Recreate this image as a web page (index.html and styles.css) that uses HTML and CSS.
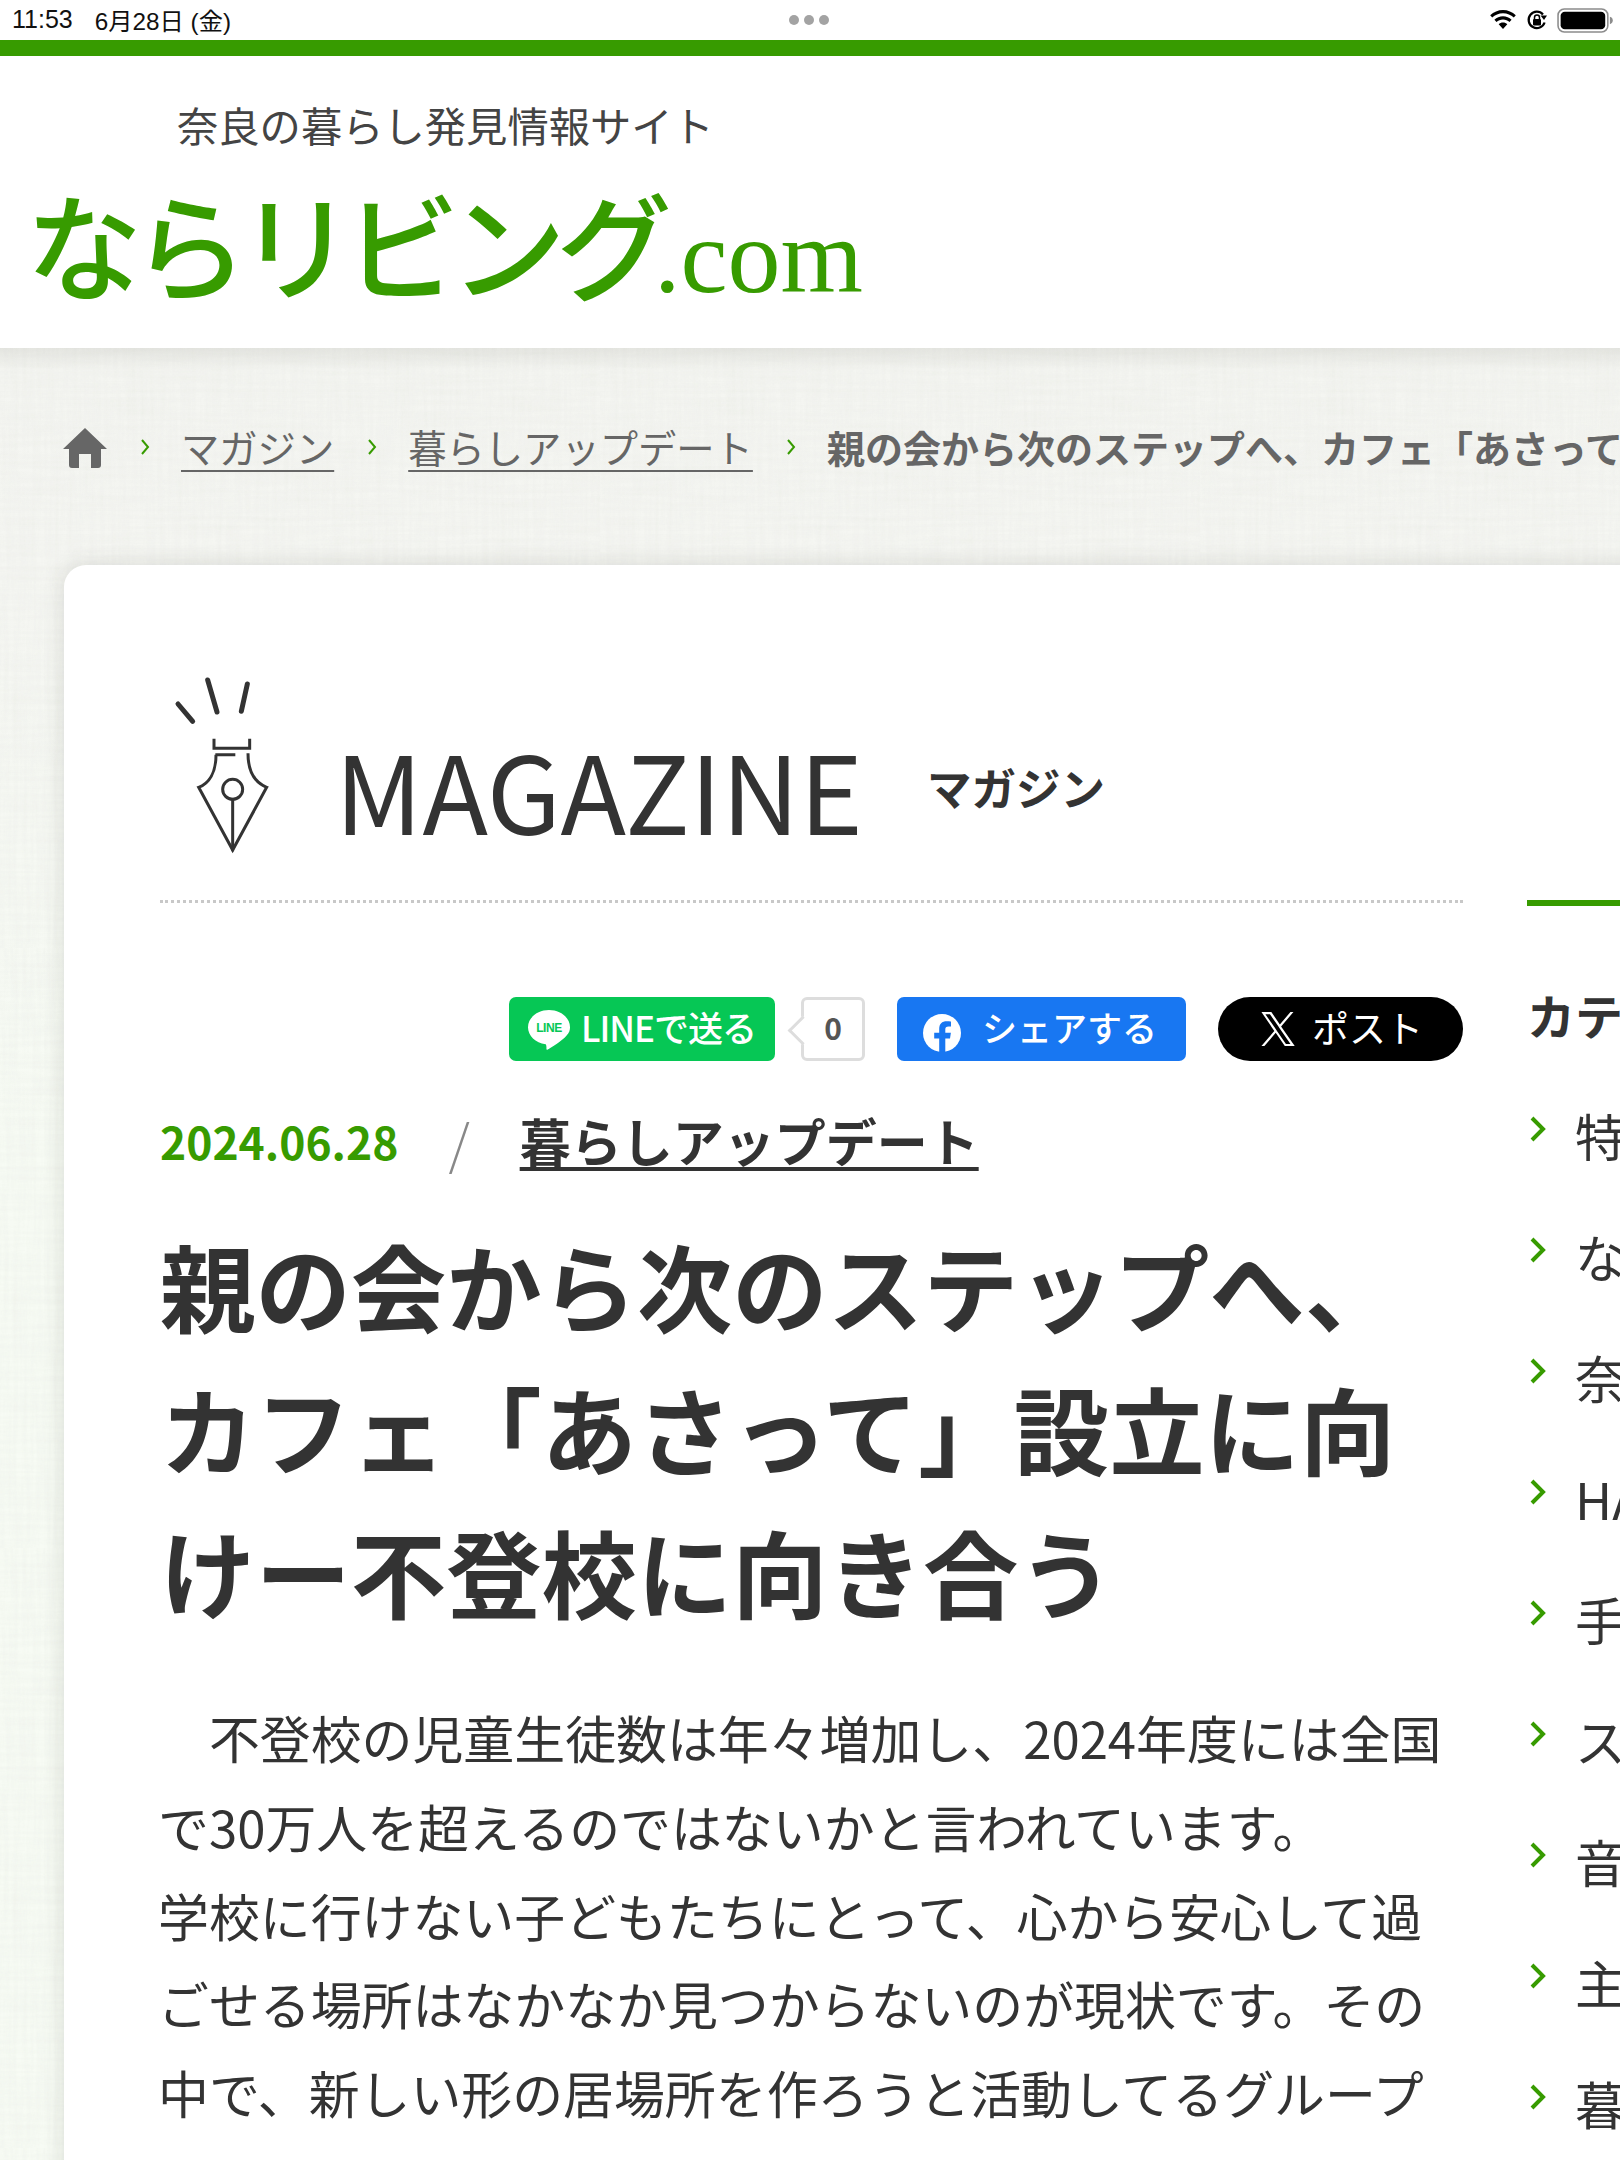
FILE: index.html
```html
<!DOCTYPE html>
<html lang="ja">
<head>
<meta charset="utf-8">
<title>ならリビング.com</title>
<link rel="stylesheet" href="styles.css">
</head>
<body>
<div class="status">
  <span class="time">11:53</span><span class="date">6月28日 (金)</span>
  <span class="dots"><i></i><i></i><i></i></span>
  <span class="status-icons">
    <svg class="wifi" viewBox="0 0 28 20" width="28" height="20"><path d="M14 3.2c4.2 0 8 1.6 10.8 4.3l2-2.2C23.400 2 18.900 0 14 0S4.600 2 1.200 5.300l2 2.200C6 4.800 9.800 3.200 14 3.200z"/><path d="M14 9.400c2.500 0 4.800 1 6.500 2.600l2.100-2.300C20.300 7.600 17.300 6.300 14 6.300s-6.300 1.300-8.600 3.400L7.500 12c1.700-1.600 4-2.600 6.500-2.600z"/><path d="M14 12.500c-1.700 0-3.200.6-4.300 1.700L14 19l4.300-4.800c-1.100-1.100-2.600-1.700-4.300-1.700z"/></svg>
    <svg class="lock" viewBox="0 0 22 22" width="22" height="22"><path d="M18.600 13.500A8.200 8.200 0 1 1 17 5.400" fill="none" stroke="#000" stroke-width="2.200"/><path d="M14.500 6.500h6.500L18 11z"/><rect x="7" y="10" width="8" height="6.500" rx="1"/><path d="M8.500 10V8.500a2.500 2.500 0 0 1 5 0V10" fill="none" stroke="#000" stroke-width="1.500"/></svg>
    <svg class="battery" viewBox="0 0 54 24" width="54" height="24"><rect x="1" y="1" width="48" height="22" rx="6" fill="none" stroke="#8c8c8c" stroke-width="1.500"/><rect x="3.500" y="3.500" width="43" height="17" rx="4"/><path d="M51 8.500c1.800.5 2.800 1.800 2.800 3.500s-1 3-2.800 3.500z" fill="#8c8c8c"/></svg>
  </span>
</div>
<div class="topbar"></div>
<header class="site-header">
  <p class="tagline">奈良の暮らし発見情報サイト</p>
  <div class="logo"><span class="logo-kana">ならリビング</span><span class="logo-com">.com</span></div>
</header>
<main class="page">
  <nav class="crumbs">
    <svg class="home" viewBox="0 0 44 40" width="44" height="40"><path d="M22 0 44 21h-6v16a3 3 0 0 1-3 3h-7V26H16v14H9a3 3 0 0 1-3-3V21H0z"/></svg>
    <svg class="chev-s" viewBox="0 0 10 18" width="10" height="18"><path d="M2 2l6 7-6 7"/></svg>
    <a class="crumb">マガジン</a>
    <svg class="chev-s" viewBox="0 0 10 18" width="10" height="18"><path d="M2 2l6 7-6 7"/></svg>
    <a class="crumb">暮らしアップデート</a>
    <svg class="chev-s" viewBox="0 0 10 18" width="10" height="18"><path d="M2 2l6 7-6 7"/></svg>
    <strong class="crumb-now">親の会から次のステップへ、カフェ「あさって」設立に向けー不登校に向き合う</strong>
  </nav>
  <div class="card">
    <article class="article">
      <div class="section-head">
        <svg class="nib" viewBox="0 0 480 660" width="160" height="220"><g fill="none" stroke="#333" stroke-linecap="round"><path stroke-width="15" d="M114 162 158 214M203 90 231 186M322 102 304 184"/><path stroke-width="9" stroke-linecap="butt" d="M222 266v29h107v-29M226 314h60M228 314c0 52-20 86-52 98l102 188 102-188c-35-14-56-44-56-102"/><circle stroke-width="9" cx="278" cy="418" r="30"/><path stroke-width="9" d="M278 448v152"/></g></svg>
        <h2 class="section-en">MAGAZINE</h2>
        <span class="section-ja">マガジン</span>
      </div>
      <div class="share">
        <a class="btn btn-line"><svg viewBox="0 0 44 44" width="44" height="44"><path fill="#fff" d="M22 3C10.400 3 1 10.700 1 20.200c0 8.500 7.500 15.600 17.600 17 .7.200 1 2.700.8 4.800 0 .7.500 1 1.400.5 2.500-1.500 13.700-8 18.600-13.700C42.400 25.700 43 23 43 20.200 43 10.700 33.600 3 22 3z"/><text class="line-mark" x="22" y="25" text-anchor="middle">LINE</text></svg><span>LINEで送る</span></a>
        <span class="count">0</span>
        <a class="btn btn-fb"><svg viewBox="0 0 40 40" width="40" height="40"><circle cx="20" cy="20" r="19" fill="#fff"/><path fill="#1877f2" d="M23.300 39.700V25.500h4.700l.9-5.700h-5.600v-3.300c0-1.700.8-3 3.300-3H29V8.600c-1-.2-2.700-.4-4.300-.4-4.700 0-7.500 2.600-7.500 7.700v3.900h-5v5.700h5v14.300c2 .5 4 .500 6.100-.1z"/></svg><span>シェアする</span></a>
        <a class="btn btn-x"><svg viewBox="0 0 24 24" width="34" height="34"><path fill="#fff" d="M14.200 10.200 22.900 0h-2.100l-7.500 8.800L7.300 0H.3l9.100 13.400L.3 24h2.100l8-9.300 6.400 9.300h7zM11.400 13.500l-.9-1.300L3.100 1.600h3.200l5.900 8.500.9 1.300 7.700 11.100h-3.200z"/></svg><span>ポスト</span></a>
      </div>
      <div class="meta">
        <time class="meta-date">2024.06.28</time>
        <span class="meta-slash">/</span>
        <a class="meta-cat">暮らしアップデート</a>
      </div>
      <h1 class="title">親の会から次のステップへ、<br>カフェ「あさって」設立に向<br>けー不登校に向き合う</h1>
      <p class="body-text">　不登校の児童生徒数は年々増加し、2024年度には全国<br>で30万人を超えるのではないかと言われています。<br>学校に行けない子どもたちにとって、心から安心して過<br>ごせる場所はなかなか見つからないのが現状です。その<br>中で、新しい形の居場所を作ろうと活動してるグループ</p>
    </article>
    <aside class="side">
      <h3 class="side-title">カテゴリー</h3>
      <ul class="side-list">
        <li><svg viewBox="0 0 18 28" width="18" height="28"><path d="M3 3l11 11-11 11"/></svg>特集</li>
        <li><svg viewBox="0 0 18 28" width="18" height="28"><path d="M3 3l11 11-11 11"/></svg>ならリビング</li>
        <li><svg viewBox="0 0 18 28" width="18" height="28"><path d="M3 3l11 11-11 11"/></svg>奈良</li>
        <li><svg viewBox="0 0 18 28" width="18" height="28"><path d="M3 3l11 11-11 11"/></svg>HAPPY</li>
        <li><svg viewBox="0 0 18 28" width="18" height="28"><path d="M3 3l11 11-11 11"/></svg>手作り</li>
        <li><svg viewBox="0 0 18 28" width="18" height="28"><path d="M3 3l11 11-11 11"/></svg>スポーツ</li>
        <li><svg viewBox="0 0 18 28" width="18" height="28"><path d="M3 3l11 11-11 11"/></svg>音楽</li>
        <li><svg viewBox="0 0 18 28" width="18" height="28"><path d="M3 3l11 11-11 11"/></svg>主婦</li>
        <li><svg viewBox="0 0 18 28" width="18" height="28"><path d="M3 3l11 11-11 11"/></svg>暮らし</li>
      </ul>
    </aside>
  </div>
</main>
</body>
</html>
```
FILE: styles.css
```css
* { box-sizing: border-box; }
html, body { margin: 0; padding: 0; width: 1620px; height: 2160px; overflow: hidden; background: #fff; }
body { font-family: "Noto Sans CJK JP", "Noto Sans", sans-serif; color: #333; }
p, h1, h2, h3, ul { margin: 0; padding: 0; }
i { font-style: normal; }

.status { height: 40px; padding-bottom: 2px; display: flex; align-items: center; position: relative; padding-left: 12px; font-family: "Liberation Sans", "Noto Sans CJK JP", sans-serif; font-size: 25px; color: #111; }
.date { margin-left: 22px; font-size: 24.300px; }
.dots { position: absolute; left: 789px; top: 15px; display: flex; gap: 5px; }
.dots i { width: 10px; height: 10px; border-radius: 50%; background: #a3a3a3; }
.status-icons { margin-left: auto; margin-right: 7px; margin-top: 2px; display: flex; align-items: center; gap: 9px; }
.battery { width: 56px; height: 25px; }

.topbar { height: 16px; background: #379b00; }

.site-header { height: 292px; background: #fff; padding-top: 38px; }
.tagline { font-size: 41.300px; line-height: 60px; margin-left: 177px; color: #444; font-weight: 400; white-space: nowrap; }
.logo { display: flex; align-items: baseline; margin-left: 26px; margin-top: 22px; color: #379b00; line-height: 130px; white-space: nowrap; }
.logo-kana { font-size: 116px; font-weight: 500; letter-spacing: -10px; }
.logo-com { font-family: "Liberation Serif", serif; font-size: 106px; margin-left: -8px; }

.page {
  height: 1812px;
  padding-left: 64px;
  overflow: hidden;
  background-color: #f5f8f2;
  background-image:
    linear-gradient(180deg, rgba(120,120,110,.12) 0, rgba(120,120,110,0) 22px),
    url("data:image/svg+xml,%3Csvg xmlns='http://www.w3.org/2000/svg' width='600' height='600'%3E%3Cfilter id='a'%3E%3CfeTurbulence type='fractalNoise' baseFrequency='.012 .22' numOctaves='2' seed='4' stitchTiles='stitch'/%3E%3CfeColorMatrix values='0 0 0 0 .45 0 0 0 0 .47 0 0 0 0 .42 0 0 0 .1 -.03'/%3E%3C/filter%3E%3Cfilter id='b'%3E%3CfeTurbulence type='fractalNoise' baseFrequency='.22 .012' numOctaves='2' seed='9' stitchTiles='stitch'/%3E%3CfeColorMatrix values='0 0 0 0 .45 0 0 0 0 .47 0 0 0 0 .42 0 0 0 .1 -.03'/%3E%3C/filter%3E%3Crect width='600' height='600' filter='url(%23a)'/%3E%3Crect width='600' height='600' filter='url(%23b)'/%3E%3C/svg%3E"),
    linear-gradient(180deg, #f4f5f1 0, #f5f6f2 220px, #f7fbf4 800px);
}

.crumbs { height: 217px; display: flex; align-items: center; padding-bottom: 20px; white-space: nowrap; font-size: 38.300px; color: #666; }
.home { fill: #666; flex: none; margin-left: -1px; margin-top: 2px; }
.chev-s { flex: none; margin: 0 31px 0 33px; fill: none; stroke: #379b00; stroke-width: 2; }
.crumb { text-decoration: underline; text-underline-offset: 7px; text-decoration-thickness: 2px; }
.crumb-now { font-weight: 700; font-size: 38px; }

.card { width: 1800px; height: 1700px; background: #fff; border-radius: 22px 0 0 0; box-shadow: 0 0 22px rgba(60,60,50,.14); padding: 85px 0 0 96px; display: flex; gap: 64px; }

.article { width: 1303px; flex: none; }
.section-head { height: 253px; margin-left: -20px; display: flex; align-items: flex-start; position: relative; }
.section-head::after { content: ""; position: absolute; left: 20px; right: 0; bottom: 0; border-bottom: 3px dotted #c8c8c8; }
.nib { flex: none; }
.section-en { font-size: 107.700px; font-weight: 400; line-height: 130px; margin: 73px 0 0 35px; }
.section-ja { font-size: 44.500px; font-weight: 700; line-height: 60px; margin: 107px 0 0 64px; }

.share { margin-top: 94px; display: flex; justify-content: flex-end; align-items: stretch; height: 64px; color: #fff; font-size: 35px; }
.btn { display: flex; align-items: center; border-radius: 7px; white-space: nowrap; }
.btn span { margin-bottom: 5px; }
.btn-line { width: 266px; background: #06c755; padding-left: 18px; gap: 10px; font-size: 35px; font-weight: 500; letter-spacing: -1px; }
.line-mark { font-size: 12px; font-weight: 700; fill: #06c755; letter-spacing: -.4px; font-family: "Liberation Sans", sans-serif; }
.count { width: 64px; margin-left: 26px; border: 3px solid #ddd; border-radius: 6px; color: #555; font-size: 30px; font-weight: 700; display: flex; align-items: center; justify-content: center; padding-bottom: 4px; position: relative; background: #fff; }
.count::before { content: ""; position: absolute; left: -12px; top: 20px; width: 18px; height: 18px; background: #fff; border-left: 3px solid #ddd; border-bottom: 3px solid #ddd; transform: rotate(45deg); }
.btn-fb { width: 289px; margin-left: 32px; background: #1877f2; padding-left: 25px; gap: 20px; font-size: 35px; font-weight: 500; }
.btn-fb svg { margin-top: 7px; }
.btn-x { width: 245px; margin-left: 32px; background: #000; border-radius: 32px; padding-left: 43px; gap: 17px; font-size: 37px; font-weight: 400; }

.meta { margin-top: 43px; height: 72px; display: flex; align-items: center; white-space: nowrap; }
.meta-date { color: #379b00; font-size: 44.400px; font-weight: 700; }
.meta-slash { color: #888; font-size: 54px; margin-left: 50px; font-weight: 300; }
.meta-cat { font-size: 51px; font-weight: 700; margin-left: 50px; text-decoration: underline; text-underline-offset: 5px; text-decoration-thickness: 4px; }

.title { margin-top: 37px; font-size: 95.400px; line-height: 143px; font-weight: 700; white-space: nowrap; }
.body-text { margin-top: 51px; margin-left: -2px; font-size: 50.900px; line-height: 88.800px; white-space: nowrap; }

.side { flex: none; width: 400px; border-top: 6px solid #379b00; margin-top: 250px; padding-top: 73px; height: 1400px; }
.side-title { font-size: 48px; font-weight: 700; line-height: 70px; white-space: nowrap; }
.side-list { list-style: none; margin-top: 48px; }
.side-list li { display: flex; align-items: flex-start; height: 121px; padding-left: 2px; font-size: 51px; line-height: 76px; white-space: nowrap; gap: 28px; }
.side-list svg { flex: none; margin-top: 18px; fill: none; stroke: #379b00; stroke-width: 4; }
```
